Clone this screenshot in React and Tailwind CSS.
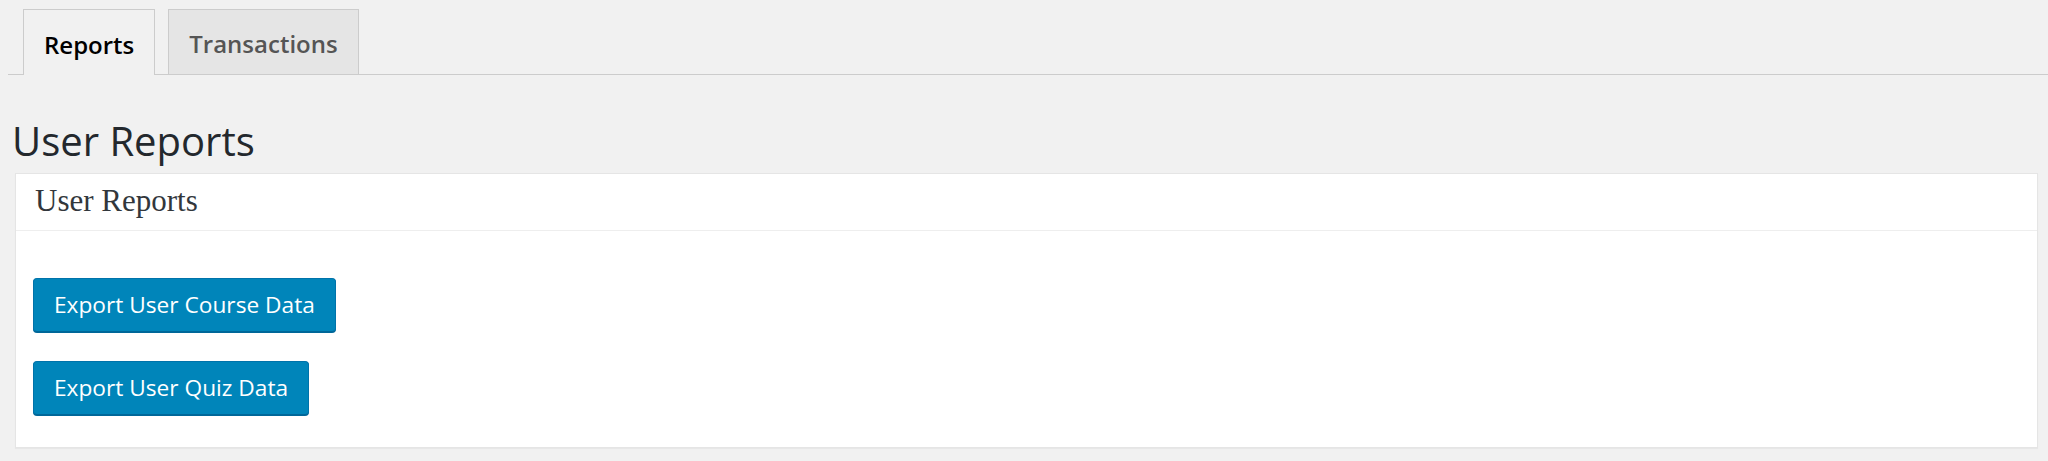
export default function App() {
    const tabs = [
        { label: 'Reports', active: true },
        { label: 'Transactions', active: false },
    ]

    const exports = ['Export User Course Data', 'Export User Quiz Data']

    return (
        <div className="min-h-[461px] bg-[#f1f1f1] font-['Open_Sans',sans-serif] overflow-hidden">
            {/* tab bar */}
            <div className="ml-[8px] pt-[9px] pl-[15px] flex gap-[13px] border-b border-[#cccccc]">
                {tabs.map((tab, i) => (
                    <div
                        key={i}
                        className={
                            tab.active
                                ? "h-[66px] -mb-px px-[20px] pt-[4px] flex items-center border border-b-0 border-[#cccccc] bg-[#f1f1f1] text-[24px] font-semibold text-[#000000]"
                                : "h-[65px] px-[20px] pt-[4px] flex items-center border border-b-0 border-[#cccccc] bg-[#e5e5e5] text-[24px] font-semibold text-[#555555]"
                        }
                    >
                        {tab.label}
                    </div>
                ))}
            </div>

            <h1 className="mt-[42px] ml-[12px] text-[40px] leading-[48px] font-normal text-[#23282d]">User Reports</h1>

            {/* report box */}
            <div className="mt-[8px] ml-[15px] mr-[10px] bg-white border border-[#e5e5e5] shadow-[0_1px_1px_rgba(0,0,0,0.04)]">
                <div className="h-[57px] pl-[19px] pt-[9px] border-b border-[#eeeeee] font-['Liberation_Serif',serif] text-[31px] leading-[36px] text-[#32373c]">
                    User Reports
                </div>
                <div className="pl-[17px] pt-[47px] pb-[32px] flex flex-col items-start gap-[29px]">
                    {exports.map((label, i) => (
                        <button
                            key={i}
                            className="h-[54px] px-[20px] rounded-[4px] border border-[#0073aa] border-b-[#006799] bg-[#0085ba] shadow-[0_1px_0_#006799] text-white text-[22.7px] leading-[52px]"
                        >
                            {label}
                        </button>
                    ))}
                </div>
            </div>
        </div>
    )
}
